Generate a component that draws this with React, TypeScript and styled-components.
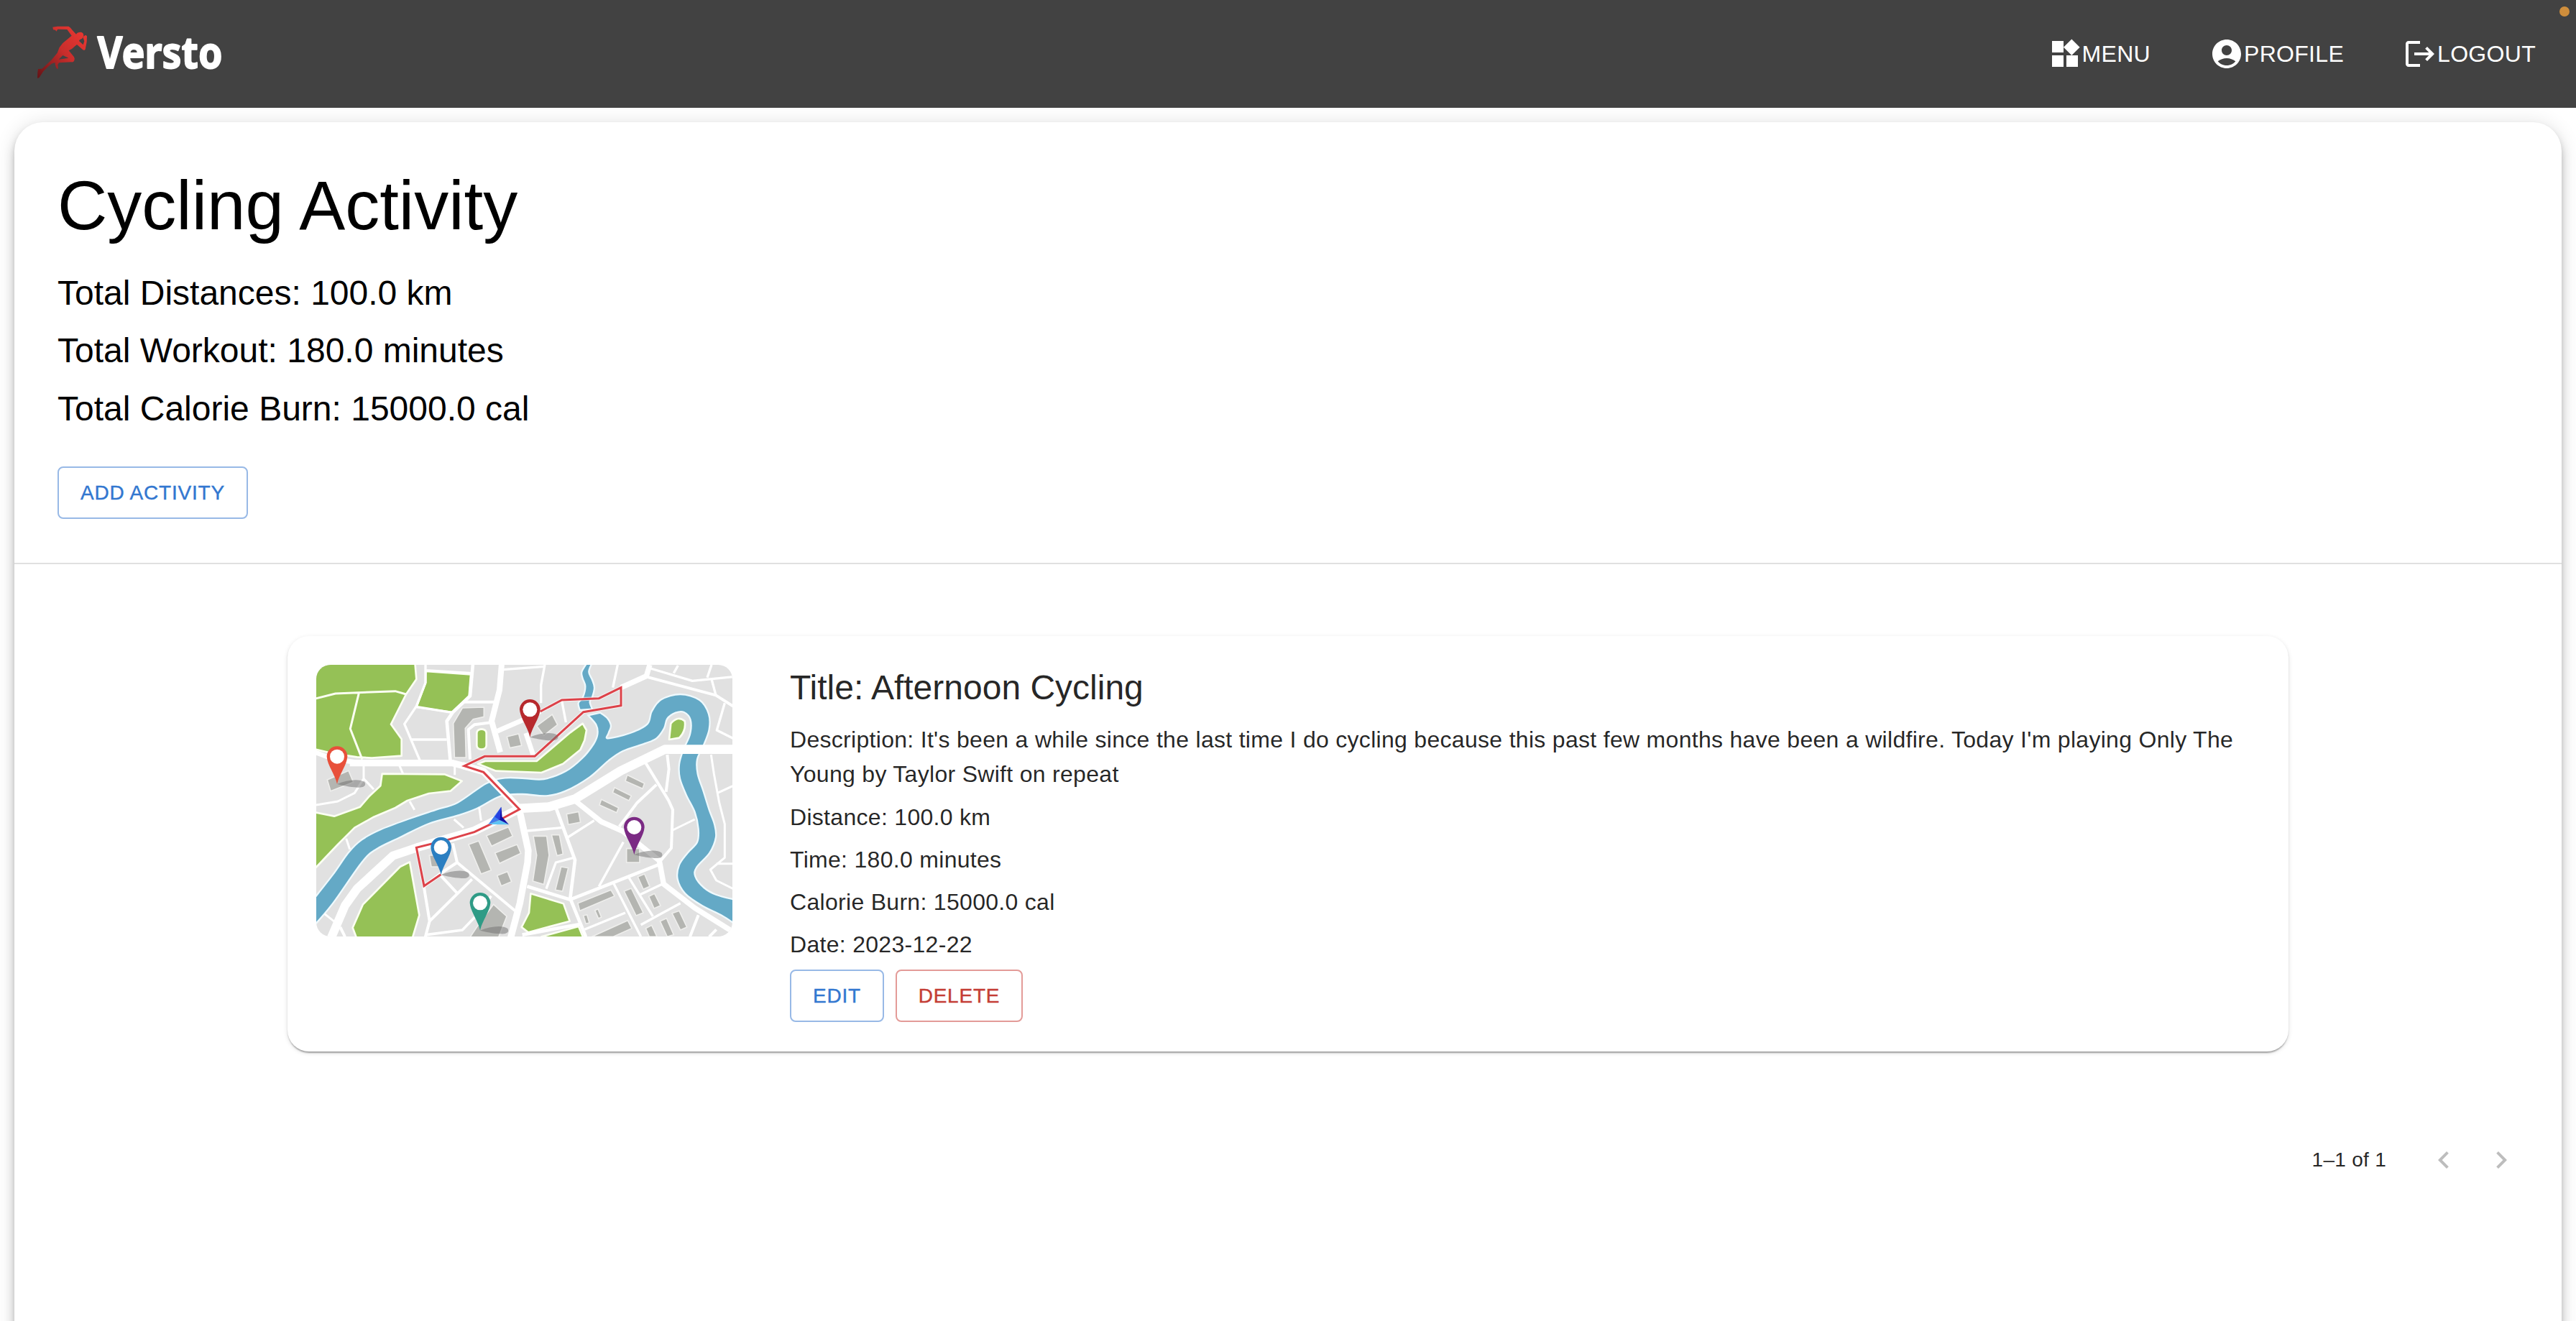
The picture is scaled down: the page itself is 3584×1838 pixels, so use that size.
import React from "react";
import styled, { createGlobalStyle } from "styled-components";

const GlobalStyle = createGlobalStyle`
  *, *::before, *::after { box-sizing: border-box; }
  body {
    margin: 0;
    background: #fff;
    font-family: "Liberation Sans", Helvetica, Arial, sans-serif;
  }
`;

const Page = styled.div`
  height: 1838px;
  display: flex;
  flex-direction: column;
  overflow: hidden;
  position: relative;
`;

const Header = styled.header`
  flex: none;
  height: 150px;
  padding: 0 56px 0 48px;
  display: flex;
  align-items: center;
  justify-content: space-between;
  background: #424242;
  position: relative;
  z-index: 1;
`;

const LogoSvg = styled.svg`
  display: block;
  width: 340px;
  height: 120px;
`;

const Nav = styled.nav`
  display: flex;
  align-items: center;
  gap: 82px;
`;

const NavItem = styled.a`
  display: flex;
  align-items: center;
  color: #fff;
  font-size: 32px;
  line-height: 48px;
  letter-spacing: 0.3px;
`;

const Icon = styled.svg`
  display: block;
  width: 48px;
  height: 48px;
  fill: currentColor;
`;

const RecordingDot = styled.span`
  position: absolute;
  top: 9px;
  right: 9px;
  width: 14px;
  height: 14px;
  border-radius: 50%;
  background: #cf8e3c;
`;

const Panel = styled.main`
  flex: none;
  min-height: 1800px;
  margin: 20px 20px 0;
  border-radius: 40px;
  background: #fff;
  box-shadow:
    0 6px 10px -2px rgba(0, 0, 0, 0.2),
    0 10px 16px 0 rgba(0, 0, 0, 0.14),
    0 2px 28px 0 rgba(0, 0, 0, 0.12);
`;

const Summary = styled.section`
  display: flex;
  flex-direction: column;
  align-items: flex-start;
  height: 615px;
  padding: 60px;
  border-bottom: 2px solid #e0e0e0;
`;

const PageTitle = styled.h1`
  margin: 0 0 33.6px;
  font-size: 96px;
  font-weight: 400;
  line-height: 112px;
  color: #000;
`;

const Total = styled.p`
  margin: 0 0 16.8px;
  font-size: 48px;
  line-height: 64px;
  color: #000;
`;

const Button = styled.button<{ $color: string; $border: string; $width: number }>`
  width: ${(p) => p.$width}px;
  height: 73px;
  padding: 0;
  border: 2px solid ${(p) => p.$border};
  border-radius: 8px;
  background: transparent;
  color: ${(p) => p.$color};
  font-family: inherit;
  font-size: 28px;
  line-height: 49px;
  letter-spacing: 0.8px;
  white-space: nowrap;
  text-align: center;
  -webkit-text-stroke: 0.4px currentColor;
`;

const AddRow = styled.div`
  display: flex;
  padding-top: 31.5px;
`;

const Card = styled.article`
  display: flex;
  gap: 80px;
  width: 2784px;
  height: 578px;
  margin: 100px auto 0;
  padding: 40px;
  border-radius: 30px;
  background: #fff;
  box-shadow:
    0 4px 2px -2px rgba(0, 0, 0, 0.2),
    0 2px 2px 0 rgba(0, 0, 0, 0.14),
    0 2px 6px 0 rgba(0, 0, 0, 0.12);
`;

const MapSvg = styled.svg`
  flex: none;
  display: block;
  width: 579px;
  height: 378px;
  border-radius: 20px;
`;

const Details = styled.div`
  flex: 1;
  min-width: 0;
  color: rgba(0, 0, 0, 0.87);
`;

const CardTitle = styled.h2`
  margin: 0 0 16.4px;
  font-size: 48px;
  font-weight: 400;
  line-height: 64px;
`;

const Line = styled.p`
  margin: 0 0 11.2px;
  font-size: 32px;
  line-height: 48px;
  letter-spacing: 0.3px;
`;

const Actions = styled.div`
  display: flex;
  gap: 16px;
`;

const Pagination = styled.div`
  display: flex;
  align-items: center;
  justify-content: flex-end;
  height: 104px;
  margin-top: 99px;
  padding-right: 44px;
`;

const Range = styled.span`
  margin-right: 40px;
  font-size: 28px;
  line-height: 40px;
  letter-spacing: 0.28px;
  color: rgba(0, 0, 0, 0.87);
`;

const PageButton = styled.span`
  padding: 16px;
  color: rgba(0, 0, 0, 0.26);
`;

type Pt = [number, number];

/* Smooth path through a list of points. */
const curve = (pts: Pt[]) => {
  let d = `M${pts[0][0]} ${pts[0][1]}`;
  for (let i = 0; i < pts.length - 1; i++) {
    const p0 = pts[Math.max(i - 1, 0)];
    const p1 = pts[i];
    const p2 = pts[i + 1];
    const p3 = pts[Math.min(i + 2, pts.length - 1)];
    d += ` C${p1[0] + (p2[0] - p0[0]) / 6} ${p1[1] + (p2[1] - p0[1]) / 6} ${p2[0] - (p3[0] - p1[0]) / 6} ${p2[1] - (p3[1] - p1[1]) / 6} ${p2[0]} ${p2[1]}`;
  }
  return d;
};

const riverNorth: Pt[] = [
  [20, 1022], [100, 920], [165, 828], [220, 775], [300, 732], [420, 687], [530, 650], [620, 620],
  [740, 540], [820, 517], [900, 519], [980, 522], [1070, 490], [1140, 435], [1188, 375], [1204, 335],
  [1198, 295], [1165, 256],
];
const riverEast: Pt[] = [
  [1215, 245], [1245, 268], [1260, 300], [1250, 330], [1248, 352], [1340, 330], [1412, 292], [1430, 240],
  [1470, 190], [1550, 168], [1630, 192], [1668, 250], [1670, 315], [1645, 385], [1620, 440], [1622, 500],
  [1645, 570], [1670, 650], [1692, 710], [1698, 765], [1672, 830], [1618, 890], [1612, 928], [1648, 975],
  [1700, 1005], [1775, 1025],
];
const riverSouth: Pt[] = [
  [1775, 1125], [1720, 1090], [1640, 1050], [1570, 1000], [1538, 940], [1545, 880], [1580, 830], [1620, 785],
  [1625, 730], [1610, 660], [1575, 590], [1548, 520], [1545, 460], [1562, 400], [1590, 335], [1592, 275],
  [1565, 243], [1530, 245], [1495, 270], [1482, 310], [1450, 352], [1400, 374], [1310, 405], [1250, 445],
  [1170, 515], [1070, 572], [990, 592], [890, 585], [800, 593], [700, 645], [620, 674], [500, 708],
  [380, 765], [280, 815], [220, 870], [100, 1040], [20, 1135],
];
const join = (d: string) => d.replace(/^M/, " L");
const river = curve(riverNorth) + join(curve(riverEast)) + join(curve(riverSouth)) + "Z";
const stream =
  curve([[1158, 40], [1138, 75], [1142, 102], [1153, 135], [1143, 180], [1124, 205], [1130, 234]]) +
  join(curve([[1182, 230], [1172, 200], [1182, 180], [1191, 140], [1182, 108], [1168, 75], [1180, 40]])) +
  "Z";

const backRoads: { w: number; d: string }[] = [
  { w: 20, d: "M20 408L100 438L215 455" },
  { w: 10, d: "M486 68L680 80M486 45V120L448 218L398 292L465 450M448 220L600 245M425 357H575" },
  { w: 14, d: "M684 40L672 175L600 243L575 280L590 450" },
  { w: 12, d: "M645 200H775" },
  { w: 24, d: "M804 40L795 150L762 280L798 410" },
  { w: 10, d: "M810 65L982 52" },
  { w: 20, d: "M785 322L900 272L965 240" },
  { w: 12, d: "M765 285L690 295L665 315L672 440" },
  { w: 10, d: "M984 45L968 130V205M1055 195L1072 285M1288 45L1268 140" },
  { w: 20, d: "M905 330L935 420" },
  { w: 22, d: "M1422 45L1408 92L1302 140" },
  { w: 10, d: "M1425 60L1600 112L1770 95M1540 48L1522 80M1680 45L1662 98M1680 105L1698 172" },
  { w: 12, d: "M1408 95L1698 172L1770 218" },
  { w: 10, d: "M1735 205L1702 318L1770 352" },
  { w: 9, d: "M228 455V520L270 565M375 460L392 500M608 470V505M228 520L190 580L120 615L30 630" },
];

const frontRoads: { w: number; d: string }[] = [
  { w: 28, d: "M170 455H600L728 488" },
  { w: 30, d: "M640 465L728 490L880 648" },
  { w: 9, d: "M155 770L170 815M420 615L440 650M710 640L718 695M605 690L645 725M65 1085L110 1120" },
  { w: 36, d: "M90 1190L150 1050L200 980L350 842L450 808L690 738L870 650" },
  { w: 38, d: "M868 645L1000 638L1110 605L1300 488L1485 398H1775" },
  { w: 12, d: "M480 975L503 1115L483 1190M130 1140L150 1180" },
  { w: 12, d: "M600 790L618 870L860 1072M618 870L550 915L480 970M550 925L620 1000M680 940L503 1115" },
  { w: 11, d: "M490 1172L640 1152L700 1090L760 1010" },
  { w: 28, d: "M878 650L915 820L912 870L880 1040L840 1190" },
  { w: 22, d: "M1110 612L1220 700L1310 740L1462 862L1480 960L1610 1060L1770 1160" },
  { w: 14, d: "M1030 640L1110 860L1090 1020L1155 1180" },
  { w: 10, d: "M910 738L1055 725M1080 765L1190 695M1105 850L1030 870L990 980" },
  { w: 14, d: "M910 970L1090 1025L1470 875M890 1172L1130 1128" },
  { w: 10, d: "M1312 785L1210 970M1270 955L1385 1180M1330 925L1435 1095M1380 1005L1475 960M1385 1130L1550 1040M1320 1080L1150 1150" },
  { w: 12, d: "M1295 720L1370 620L1450 545M1405 455L1500 610L1518 650L1512 810L1465 865M1495 420L1502 480L1490 575" },
  { w: 9, d: "M1518 735L1610 690M1678 420L1690 500L1712 620L1735 710V850L1675 900L1700 945L1770 980M1705 580L1770 550M1700 875H1770" },
  { w: 12, d: "M1625 1090L1590 1180M1700 1150L1670 1180" },
];

const buildings = [
  "M640 225L730 222V262L685 272L652 310L655 432H607L602 290Z",
  "M826 345L875 333L887 382L838 392Z",
  "M950 300L1015 252L1037 295L980 340Z",
  "M76 525L165 487L185 535L90 572Z",
  "M1328 505L1400 540L1392 562L1320 530Z",
  "M1275 557L1345 592L1335 612L1267 578Z",
  "M1220 607L1292 642L1284 662L1212 630Z",
  "M1075 668L1125 658L1133 702L1082 712Z",
  "M936 760H992L1002 840L980 962L934 948L950 840Z",
  "M1012 755H1045L1060 835L1035 842Z",
  "M1052 888L1082 893L1058 990L1028 985Z",
  "M1325 812H1380V870H1325Z",
  "M740 758L832 722L850 760L762 802Z",
  "M776 830L868 795L884 832L795 874Z",
  "M666 795L708 780L760 902L718 918Z",
  "M785 925L828 908L845 950L802 968Z",
  "M502 840L545 840V888H510Z",
  "M670 1185L700 1140L770 1045L825 1095L790 1185Z",
  "M1122 1040L1260 985L1275 1010L1130 1072Z",
  "M1145 1092L1160 1088L1170 1122L1155 1126Z",
  "M1193 1070L1206 1064L1220 1098L1208 1104Z",
  "M1180 1180L1330 1112L1347 1145L1270 1180Z",
  "M1315 990L1345 978L1395 1080L1365 1092Z",
  "M1372 930L1400 918L1422 970L1395 982Z",
  "M1418 1012L1442 1000L1467 1050L1440 1062Z",
  "M1405 1145L1430 1132L1452 1180H1420Z",
  "M1465 1115L1492 1103L1522 1172L1495 1180Z",
  "M1515 1082L1545 1072L1577 1140L1550 1152Z",
];

const parks = [
  "M20 35H442L448 105L405 168L342 293L386 355V425L262 434L200 430L100 415L20 396Z",
  "M487 72L675 85L668 175L600 243L448 222L486 120Z",
  "M305 500L565 502L638 530L590 572L500 582L410 612L360 642L270 680L190 725L120 795L20 900V660L105 677L213 638L250 595L298 550Z",
  "M705 458L735 447H950L1090 328L1142 290L1158 318L1150 360L1132 400L1060 458L970 495L780 488Z",
  "M700 330Q701 314 720 313Q739 314 740 330V382Q739 397 720 398Q701 397 700 382Z",
  "M1510 290Q1540 255 1568 280Q1575 320 1545 350L1503 357Z",
  "M420 868L460 1090L430 1190H200L182 1142L225 1045L380 888Z",
  "M925 1000L1062 1042L1088 1115L915 1162L887 1140L918 1080Z",
  "M970 1180L1125 1137L1145 1185H970Z",
];

const Pin = ({ x, y, color }: { x: number; y: number; color: string }) => (
  <g transform={`translate(${x} ${y})`}>
    <path d="M0 0C40 -18 95 -24 115 -8C124 8 108 16 85 14C50 12 25 6 0 0Z" fill="#6f6f6f" opacity=".5" />
    <path d="M0 0C-7 -38 -41 -80 -43 -115A43 43 0 0 1 43 -115C41 -80 7 -38 0 0Z" fill={color} />
    <circle cy="-115" r="30" fill="#fff" />
  </g>
);

const route =
  "M965 240L1055 192L1210 185L1302 140V215L1145 242L942 427H733L648 467L728 493L878 648L800 690L690 743L580 775L448 808L480 968L550 920";

const RouteMap = () => (
  <MapSvg viewBox="30 45 1737 1134" preserveAspectRatio="none">
    <rect x="30" y="45" width="1737" height="1134" fill="#e1e1e1" />
    <g fill="#95c156" stroke="#fbfff2" strokeWidth="8" strokeLinejoin="round">
      {parks.map((d) => (
        <path key={d} d={d} />
      ))}
    </g>
    <path d="M20 188L110 165L360 155L405 168M208 163L172 312L222 440" fill="none" stroke="#fbfff2" strokeWidth="9" />
    <g fill="none" stroke="#fff" strokeLinejoin="round">
      {backRoads.map((r) => (
        <path key={r.d} d={r.d} strokeWidth={r.w} />
      ))}
    </g>
    <g fill="#64a9c6" stroke="#eef9fd" strokeWidth="7">
      <path d={stream} />
      <path d={river} />
    </g>
    <g fill="none" stroke="#fff" strokeLinejoin="round">
      {frontRoads.map((r) => (
        <path key={r.d} d={r.d} strokeWidth={r.w} />
      ))}
    </g>
    <g fill="#b4b5b1" stroke="#eeeeec" strokeWidth="5">
      {buildings.map((d) => (
        <path key={d} d={d} />
      ))}
    </g>
    <path d={route} fill="none" stroke="#fff" strokeWidth="16" opacity=".6" />
    <path d={route} fill="none" stroke="#dd4249" strokeWidth="9" />
    <path d="M802 638L748 711L796 692Z" fill="#3f7bef" />
    <path d="M748 711L796 692L834 712Z" fill="#5ec3f5" />
    <path d="M802 638L790 690L834 712L806 680Z" fill="#1411a6" />
    <path d="M802 638L775 680L796 692Z" fill="#2740e0" />
    <Pin x={117} y={543} color="#e8503a" />
    <Pin x={922} y={347} color="#b7292d" />
    <Pin x={551} y={922} color="#2b7fc1" />
    <Pin x={714} y={1154} color="#2f9b86" />
    <Pin x={1357} y={838} color="#7b2a84" />
  </MapSvg>
);

const Logo = () => (
  <LogoSvg viewBox="48 15 340 120">
    <defs>
      <linearGradient id="runner" x1="1" y1="0.1" x2="0" y2="1">
        <stop offset="0" stopColor="#ea3832" />
        <stop offset="0.45" stopColor="#c92e2c" />
        <stop offset="1" stopColor="#641316" />
      </linearGradient>
    </defs>
    <g fill="url(#runner)" transform="scale(.33333)">
      <path
        fillRule="evenodd"
        d="M220 113L240 110H286Q292 112 304 128L318 143Q322 134 337 134Q349 136 349 148Q347 163 336 164Q330 166 330 171L347 187L352 172L347 158Q347 150 353 149Q357 144 363 151L362 175L356 206Q352 212 346 208L321 186L311 194Q300 206 287 211L309 238Q314 246 309 255Q306 260 298 259L246 262L241 270L243 287L236 286L231 272L229 261L215 266Q195 282 181 298L163 325L156 326L157 303L159 288L175 287L214 251L239 221L248 198L262 180L299 149L280 123L241 122L235 131L231 125L222 124ZM245 248L286 242L262 231Z"
      />
    </g>
    <text
      x="135.5"
      y="95.2"
      textLength="174"
      lengthAdjust="spacingAndGlyphs"
      fill="#fff"
      stroke="#fff"
      strokeWidth="1.8"
      strokeLinejoin="round"
      fontFamily='"Noto Sans", "Open Sans", sans-serif'
      fontWeight="700"
      fontSize="61.5"
    >
      Versto
    </text>
  </LogoSvg>
);

const navItems = [
  {
    label: "MENU",
    icon: "M13 13v8h8v-8h-8zM3 21h8v-8H3v8zM3 3v8h8V3H3zm13.66-1.31L11 7.34 16.66 13l5.66-5.66-5.66-5.65z",
  },
  {
    label: "PROFILE",
    icon: "M12 2C6.48 2 2 6.48 2 12s4.48 10 10 10 10-4.48 10-10S17.52 2 12 2zm0 4c1.93 0 3.5 1.57 3.5 3.5S13.93 13 12 13s-3.5-1.57-3.5-3.5S10.07 6 12 6zm0 14c-2.03 0-4.43-.82-6.14-2.88C7.55 15.8 9.68 15 12 15s4.45.8 6.14 2.12C16.43 19.18 14.03 20 12 20z",
  },
  {
    label: "LOGOUT",
    icon: "m17 7-1.41 1.41L18.17 11H8v2h10.17l-2.58 2.58L17 17l5-5zM4 5h8V3H4c-1.1 0-2 .9-2 2v14c0 1.1.9 2 2 2h8v-2H4V5z",
  },
];

const totals = ["Total Distances: 100.0 km", "Total Workout: 180.0 minutes", "Total Calorie Burn: 15000.0 cal"];

const lines = [
  "Description: It's been a while since the last time I do cycling because this past few months have been a wildfire. Today I'm playing Only The Young by Taylor Swift on repeat",
  "Distance: 100.0 km",
  "Time: 180.0 minutes",
  "Calorie Burn: 15000.0 cal",
  "Date: 2023-12-22",
];

const arrows = [
  "M15.41 16.59L10.83 12l4.58-4.59L14 6l-6 6 6 6 1.41-1.41z",
  "M8.59 16.59L13.17 12 8.59 7.41 10 6l6 6-6 6-1.41-1.41z",
];

export default function App() {
  return (
    <>
      <GlobalStyle />
      <Page>
        <Header>
          <Logo />
          <Nav>
            {navItems.map((item) => (
              <NavItem key={item.label}>
                <Icon viewBox="0 0 24 24">
                  <path d={item.icon} />
                </Icon>
                {item.label}
              </NavItem>
            ))}
          </Nav>
          <RecordingDot />
        </Header>
        <Panel>
          <Summary>
            <PageTitle>Cycling Activity</PageTitle>
            {totals.map((t) => (
              <Total key={t}>{t}</Total>
            ))}
            <AddRow>
              <Button $color="#3277d0" $border="#98b9e6" $width={265}>
                ADD ACTIVITY
              </Button>
            </AddRow>
          </Summary>
          <Card>
            <RouteMap />
            <Details>
              <CardTitle>Title: Afternoon Cycling</CardTitle>
              {lines.map((l) => (
                <Line key={l}>{l}</Line>
              ))}
              <Actions>
                <Button $color="#3277d0" $border="#98b9e6" $width={131}>
                  EDIT
                </Button>
                <Button $color="#c43d35" $border="#e39b98" $width={177}>
                  DELETE
                </Button>
              </Actions>
            </Details>
          </Card>
          <Pagination>
            <Range>1–1 of 1</Range>
            {arrows.map((d) => (
              <PageButton key={d}>
                <Icon viewBox="0 0 24 24">
                  <path d={d} />
                </Icon>
              </PageButton>
            ))}
          </Pagination>
        </Panel>
      </Page>
    </>
  );
}
